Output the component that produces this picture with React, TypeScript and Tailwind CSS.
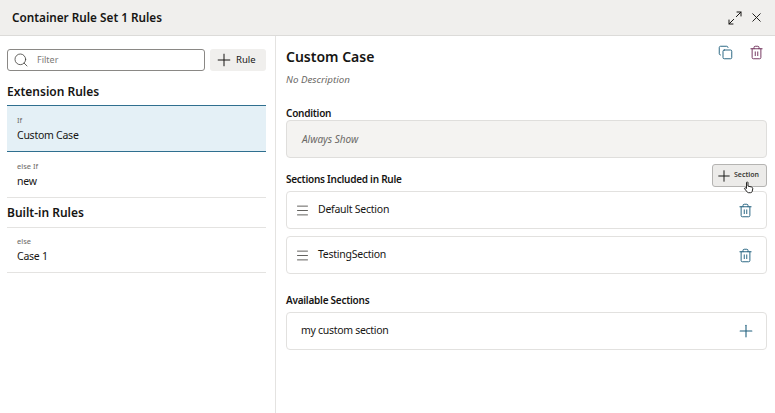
import { Copy, Maximize2, Menu, Plus, Search, Trash2, X } from "lucide-react";

const font = { fontFamily: '"Noto Sans", sans-serif' };

function RuleRow({ kind, name, rowClass }: { kind: string; name: string; rowClass: string }) {
  return (
    <div className={`flex flex-col justify-center pl-[10px] ${rowClass}`}>
      <div className="text-[7.5px] leading-[12px] text-[#6b6966]">{kind}</div>
      <div className="text-[10.5px] leading-[18px] tracking-[-0.25px] text-[#161513]">{name}</div>
    </div>
  );
}

function SectionRow({ name }: { name: string }) {
  return (
    <div className="flex h-[38px] items-center justify-between rounded-[4px] border border-[#e2e1df] pl-[8px] pr-[12px]">
      <div className="flex items-center gap-[8px]">
        <Menu size={15} strokeWidth={1.3} className="text-[#3f3d3a]" />
        <span className="text-[10.5px] tracking-[-0.25px] text-[#161513]">{name}</span>
      </div>
      <Trash2 size={15} strokeWidth={1.5} className="mr-[1px] text-[#1f5f7d]" />
    </div>
  );
}

export default function App() {
  return (
    <div style={font} className="flex h-[413px] w-[775px] flex-col overflow-hidden bg-white">
      <header className="flex h-[36px] shrink-0 items-center justify-between border-b border-b-[#dcdbd9] bg-[#f0efed] pl-[12px] pr-[11px]">
        <h1 className="text-[11.75px] font-semibold text-[#161513]">Container Rule Set 1 Rules</h1>
        <div className="flex items-center gap-[6px]">
          <Maximize2 size={16} strokeWidth={1.5} className="text-[#161513]" />
          <X size={15} strokeWidth={1.5} className="text-[#161513]" />
        </div>
      </header>

      <div className="flex flex-1">
        <aside className="w-[276px] shrink-0 border-r border-r-[#e4e3e1] pl-[7px] pr-[9px] pt-[13px]">
          <div className="flex gap-[5px]">
            <div className="flex h-[22px] w-[198px] items-center gap-[8px] rounded-[3px] border border-[#8a8885] pl-[5px]">
              <Search size={16} strokeWidth={1.2} className="text-[#3f3d3a]" />
              <span className="text-[9px] text-[#7d7b78]">Filter</span>
            </div>
            <button className="flex h-[22px] w-[56px] items-center gap-[2px] rounded-[3px] bg-[#f0efed] pl-[4px] text-[9.5px] text-[#161513]">
              <Plus size={20} strokeWidth={1.2} />
              Rule
            </button>
          </div>
          <h2 className="mt-[11px] h-[23px] text-[12px] font-semibold leading-[20px] text-[#161513]">Extension Rules</h2>
          <RuleRow kind="If" name="Custom Case" rowClass="h-[47px] border-y border-y-[#2f6f8f] bg-[#e4f0f6]" />
          <RuleRow kind="else If" name="new" rowClass="h-[46px] border-b border-b-[#e4e3e1]" />
          <h2 className="flex h-[30px] items-center border-b border-b-[#e4e3e1] text-[12px] font-semibold text-[#161513]">
            Built-in Rules
          </h2>
          <RuleRow kind="else" name="Case 1" rowClass="h-[45px] border-b border-b-[#e4e3e1]" />
        </aside>

        <main className="flex-1 pl-[10px] pr-[8px]">
          <div className="flex h-[38px] items-center justify-between pr-[3px]">
            <h2 className="pt-[2px] text-[14px] font-semibold text-[#161513]">Custom Case</h2>
            <div className="flex items-center gap-[16px] pb-[6px]">
              <Copy size={15} strokeWidth={1.5} className="text-[#1f5f7d]" />
              <Trash2 size={15} strokeWidth={1.5} className="text-[#6f2f5a]" />
            </div>
          </div>
          <p className="text-[9.75px] italic leading-[12px] text-[#6b6966]">No Description</p>
          <h3 className="mt-[20px] text-[10px] font-semibold leading-[14px] tracking-[-0.25px] text-[#161513]">Condition</h3>
          <div className="flex h-[38px] items-center rounded-[4px] border border-[#dfdedc] bg-[#f4f3f1] pl-[15px] text-[10px] italic text-[#6b6966]">
            Always Show
          </div>
          <div className="flex h-[33px] items-end justify-between">
            <h3 className="mb-[5px] text-[10px] font-semibold leading-[14px] tracking-[-0.25px] text-[#161513]">Sections Included in Rule</h3>
            <button className="relative mb-[4px] flex h-[23px] w-[55px] items-center gap-[1px] rounded-[3px] border border-[#b5b4b2] bg-[#ecebe9] pl-[2px] text-[7px] font-semibold text-[#3a3936]">
              <Plus size={18} strokeWidth={1.3} className="text-[#161513]" />
              Section
              <svg width="12" height="13" viewBox="0 0 12 14" className="absolute left-[30px] top-[16px]">
                <path
                  d="M3.5 1.2c.7-.5 1.4 0 1.4.7v3.6l3.7.9c1 .3 1.6 1 1.4 2.1l-.5 2.6c-.2.9-.9 1.5-1.8 1.5H5.5c-.6 0-1.1-.3-1.5-.8L1.3 8.4c-.4-.6.3-1.4 1-1l1 .7V2c0-.3 0-.6.2-.8z"
                  fill="#fff"
                  stroke="#161513"
                  strokeWidth="1"
                />
              </svg>
            </button>
          </div>
          <div className="flex flex-col gap-[7px]">
            <SectionRow name="Default Section" />
            <SectionRow name="TestingSection" />
          </div>
          <h3 className="mt-[19px] text-[10px] font-semibold leading-[14px] tracking-[-0.25px] text-[#161513]">Available Sections</h3>
          <div className="mt-[5px] flex h-[38px] items-center justify-between rounded-[4px] border border-[#e2e1df] pl-[14px] pr-[10px]">
            <span className="text-[10.5px] tracking-[-0.3px] text-[#161513]">my custom section</span>
            <Plus size={20} strokeWidth={1.3} className="text-[#1f5f7d]" />
          </div>
        </main>
      </div>
    </div>
  );
}
